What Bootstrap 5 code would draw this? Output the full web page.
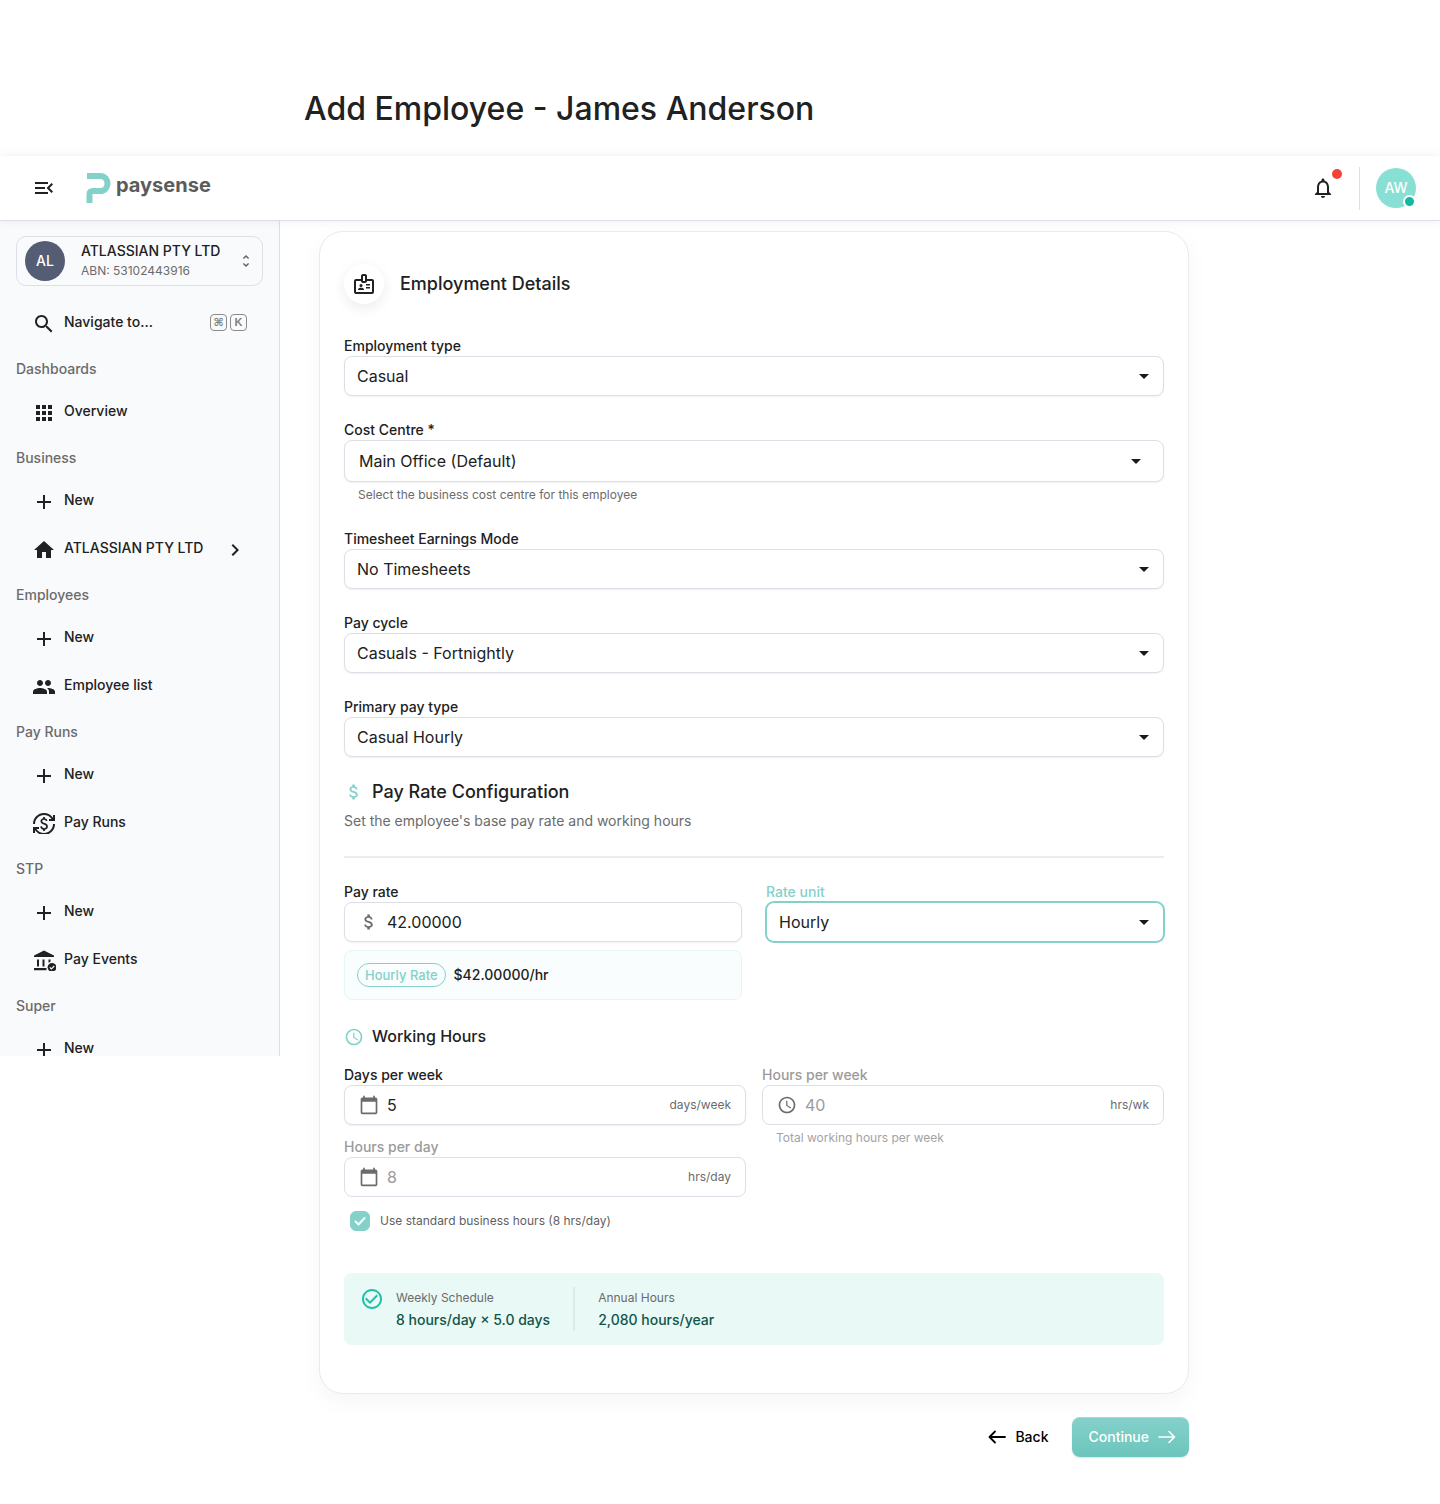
<!DOCTYPE html>
<html lang="en">
<head>
<meta charset="utf-8">
<meta name="viewport" content="width=device-width, initial-scale=1">
<title>Add Employee - Paysense</title>
<link href="https://cdn.jsdelivr.net/npm/bootstrap@5.3.0/dist/css/bootstrap.min.css" rel="stylesheet">
<style>
  :root { --teal: #84d1ca; --ink: #212121; --soft: #6b6b6b; --line: #dcdfe6; }
  body { font-family: Inter, "Liberation Sans", sans-serif; font-size: 14px; line-height: 20px; color: var(--ink); background: #fff; }
  svg { fill: currentColor; flex: none; display: block; }
  .i24 { width: 24px; height: 24px; }
  .i20 { width: 20px; height: 20px; }
  .i16 { width: 16px; height: 16px; }
  .page-title { font-size: 32px; line-height: 40px; font-weight: 500; padding: 89px 24px 27px 304px; margin: 0; }
  .topbar { height: 65px; padding: 0 24px 0 32px; background: #fff; border-bottom: 1px solid var(--line); box-shadow: 0 0 10px rgba(0,0,0,.07); position: relative; z-index: 2; }
  .icon-btn { border: 0; background: none; padding: 0; color: var(--ink); }
  .brand { gap: 5px; margin-left: 30px; color: #5b5b5b; font-weight: 700; font-size: 20px; line-height: 24px; text-decoration: none; }
  .brand span { padding-bottom: 6px; }
  .bell-dot { position: absolute; top: -7px; right: -7px; width: 10px; height: 10px; border-radius: 50%; background: #f44336; }
  .rule-v { width: 1px; height: 43px; background: var(--line); margin: 0 16px 0 24px; }
  .face { width: 40px; height: 40px; border-radius: 50%; color: #fff; font-size: 14px; font-weight: 500; position: relative; flex: none; }
  .face-me { background: #88dfd3; }
  .face-co { background: #555d74; }
  .online { position: absolute; right: 0; bottom: 0; width: 13px; height: 13px; border-radius: 50%; background: #12b8a0; border: 2px solid #fff; }
  .side { width: 280px; flex: none; max-height: 835px; overflow: hidden; padding: 15px 16px 0; background: #f9fafc; border-right: 1px solid var(--line); }
  .company { width: 100%; height: 50px; padding: 0 8px; gap: 16px; border: 1px solid var(--line); border-radius: 10px; background: none; color: var(--ink); margin-bottom: 14px; text-align: left; }
  .company > svg { fill: #606060; }
  .co-name { font-weight: 500; line-height: 20px; }
  .co-abn { font-size: 12px; line-height: 20px; color: var(--soft); }
  .side-head { font-size: 14px; line-height: 41px; font-weight: 500; color: var(--soft); margin: 0; }
  .side-link { height: 48px; padding: 0 16px; gap: 8px; color: var(--ink); font-weight: 500; text-decoration: none; }
  .side-link > span { padding-bottom: 4px; }
  .side-link > svg:first-child { clip-path: inset(0 0 2px 0); }
  .keys { gap: 3px; }
  .key { width: 17px; height: 17px; border: 1px solid #8a8a8a; border-radius: 4px; color: #808080; font: 700 11px/15px "Liberation Sans", "DejaVu Sans", sans-serif; text-align: center; }
  .content { padding: 10px 24px 47px 39px; }
  .wrap { max-width: 870px; }
  .panel { border: 1px solid #e9eaec; border-radius: 24px; background: #fff; padding: 32px 24px 48px; box-shadow: 0 8px 24px rgba(0,0,0,.04); }
  .round-ic { width: 40px; height: 40px; border-radius: 50%; background: #fff; box-shadow: 0 4px 14px rgba(0,0,0,.08); }
  .h-lg { font-size: 18px; line-height: 22px; font-weight: 500; margin: 0; }
  .h-md { font-size: 16px; line-height: 25px; font-weight: 500; margin: 0; }
  .lbl { display: block; font-size: 14px; line-height: 20px; font-weight: 500; }
  .lbl-off { color: #9b9b9b; }
  .field { margin-bottom: 24px; }
  .hint { font-size: 12px; line-height: 19px; color: var(--soft); padding: 3px 14px 1px; }
  .hint-off { color: #a3a3a3; }
  .sel, .box { height: 40px; border: 1px solid var(--line); border-radius: 8px; background-color: #fff; box-shadow: 0 1px 2px rgba(0,0,0,.06); color: var(--ink); font-size: 16px; }
  .sel { line-height: 24px; padding: 0 40px 0 12px; background-image: url("data:image/svg+xml,%3Csvg xmlns='http://www.w3.org/2000/svg' viewBox='0 0 24 24'%3E%3Cpath d='M7 10l5 5 5-5z' fill='%231a1a1a'/%3E%3C/svg%3E"); background-size: 24px 24px; background-position: right 7px center; }
  .sel-tall { height: 42px; padding-left: 14px; background-position: right 15px center; }
  .sel-on { border-color: var(--teal); box-shadow: 0 0 0 1px var(--teal); }
  .box { padding: 0 14px; gap: 8px; color: var(--soft); }
  .box-off { box-shadow: none; }
  .box input { border: 0; outline: 0; padding: 0; background: none; color: var(--ink); flex: 1 1 0; min-width: 0; height: 38px; }
  .box input:disabled { color: #9b9b9b; }
  .unit { font-size: 12px; }
  .sub-head { color: var(--soft); line-height: 21px; padding: 7px 0 25px; margin-bottom: 24px; border-bottom: 2px solid #ebecee; }
  .rate-note { height: 50px; margin-top: 8px; padding: 0 12px; gap: 8px; background: #f9fdfd; border: 1px solid #e6f6f4; border-radius: 8px; font-weight: 500; }
  .chip { border: 1px solid var(--teal); border-radius: 12px; color: var(--teal); font-size: 13px; line-height: 22px; padding: 0 7px; }
  .teal { color: var(--teal); }
  .hours-head { margin: 24px 0 16px; }
  .stack { gap: 12px; }
  .std { gap: 10px; margin: 14px 0 42px 6px; min-height: 20px; }
  .std input { width: 20px; height: 20px; margin: 0; border-radius: 6px; flex: none; }
  .std input[type=checkbox] { border-radius: 6px; }
  .std input:checked { background-color: var(--teal); border-color: var(--teal); background-size: 20px 20px; background-image: url("data:image/svg+xml,%3Csvg xmlns='http://www.w3.org/2000/svg' viewBox='0 0 20 20'%3E%3Cpath d='M5.500 10.500l3 3 6-6.500' fill='none' stroke='%23fff' stroke-width='2' stroke-linecap='round' stroke-linejoin='round'/%3E%3C/svg%3E"); }
  .std label { font-size: 12px; color: #5f5f5f; }
  .summary { background: #e9f9f6; border-radius: 8px; padding: 14px 16px; line-height: 22px; }
  .summary svg { fill: #22bfa7; }
  .summary small { display: block; font-size: 12px; color: var(--soft); }
  .summary strong { display: block; font-weight: 500; color: #0f5549; }
  .rule-s { width: 2px; background: #dfeae8; margin: 0 23px; }
  .foot { margin-top: 23px; gap: 16px; }
  .act { height: 40px; border-radius: 8px; font-size: 14px; line-height: 20px; font-weight: 500; gap: 8px; border: 0; }
  .act-back { padding: 0 8px; color: #000; }
  .act-next { padding: 0 12px 0 16px; color: #fff; background: linear-gradient(#84d1ca, #6cc5bc); box-shadow: 0 1px 2px rgba(0,0,0,.12), inset 0 1px 0 rgba(255,255,255,.25); }
  .act-next:hover { color: #fff; background: #6cc5bc; }
</style>
</head>
<body>
<svg class="d-none" aria-hidden="true">
  <symbol id="plus" viewBox="0 0 24 24"><path d="M19 13h-6v6h-2v-6H5v-2h6V5h2v6h6v2z"/></symbol>
  <symbol id="cal" viewBox="0 0 24 24"><path d="M20 3h-1V1h-2v2H7V1H5v2H4c-1.1 0-2 .9-2 2v16c0 1.1.9 2 2 2h16c1.1 0 2-.9 2-2V5c0-1.1-.9-2-2-2zm0 18H4V8h16v13z"/></symbol>
  <symbol id="clock" viewBox="0 0 24 24"><path d="M11.99 2C6.47 2 2 6.48 2 12s4.47 10 9.99 10C17.52 22 22 17.52 22 12S17.52 2 11.99 2zM12 20c-4.42 0-8-3.58-8-8s3.58-8 8-8 8 3.58 8 8-3.58 8-8 8zm.5-13H11v6l5.25 3.15.75-1.23-4.5-2.67z"/></symbol>
  <symbol id="money" viewBox="0 0 24 24"><path d="M11.8 10.9c-2.27-.59-3-1.2-3-2.15 0-1.09 1.01-1.85 2.7-1.85 1.78 0 2.44.85 2.5 2.1h2.21c-.07-1.72-1.12-3.3-3.21-3.81V3h-3v2.16c-1.94.42-3.5 1.68-3.5 3.61 0 2.31 1.91 3.46 4.7 4.13 2.5.6 3 1.48 3 2.41 0 .69-.49 1.79-2.7 1.79-2.06 0-2.87-.92-2.98-2.1h-2.2c.12 2.19 1.76 3.42 3.68 3.83V21h3v-2.15c1.95-.37 3.5-1.5 3.5-3.55 0-2.84-2.43-3.81-4.7-4.4z"/></symbol>
</svg>

<h1 class="page-title">Add Employee - James Anderson</h1>

<header class="topbar d-flex align-items-center">
  <button type="button" class="icon-btn" aria-label="Collapse menu"><svg class="i24" viewBox="0 0 24 24"><path d="M3 18h13v-2H3v2zm0-5h10v-2H3v2zm0-7v2h13V6H3zm18 9.59L17.42 12 21 8.41 19.59 7l-5 5 5 5L21 15.59z"/></svg></button>
  <a class="brand d-flex align-items-center" href="#">
    <svg width="25" height="30" viewBox="0 0 25 30"><path d="M1 3H14C24 3 24 18 14 18H7Q3.500 18 3.500 21V30" fill="none" stroke="#84d1ca" stroke-width="6"/></svg>
    <span>paysense</span>
  </a>
  <div class="d-flex align-items-center ms-auto">
    <button type="button" class="icon-btn position-relative" aria-label="Notifications"><svg class="i24" viewBox="0 0 24 24"><path d="M12 22c1.100 0 2-.9 2-2h-4c0 1.100.9 2 2 2zm6-6v-5c0-3.070-1.630-5.640-4.500-6.320V4c0-.83-.67-1.500-1.500-1.500s-1.500.67-1.500 1.500v.68C7.640 5.360 6 7.920 6 11v5l-2 2v1h16v-1l-2-2zm-2 1H8v-6c0-2.480 1.510-4.500 4-4.500s4 2.020 4 4.500v6z"/></svg><span class="bell-dot"></span></button>
    <div class="rule-v"></div>
    <div class="face face-me d-flex align-items-center justify-content-center">AW<span class="online"></span></div>
  </div>
</header>

<div class="d-flex align-items-start">
  <nav class="side" aria-label="Main">
    <button type="button" class="company d-flex align-items-center">
      <span class="face face-co d-flex align-items-center justify-content-center">AL</span>
      <span class="d-flex flex-column flex-grow-1"><span class="co-name">ATLASSIAN PTY LTD</span><span class="co-abn">ABN: 53102443916</span></span>
      <svg class="i16" viewBox="0 0 24 24"><path d="M12 5.830L15.170 9l1.410-1.410L12 3 7.410 7.590 8.830 9 12 5.830zm0 12.340L8.830 15l-1.410 1.410L12 21l4.590-4.590L15.170 15 12 18.170z"/></svg>
    </button>
    <a class="side-link d-flex align-items-center" href="#"><svg class="i24" viewBox="0 0 24 24"><path d="M15.500 14h-.79l-.28-.27C15.410 12.590 16 11.110 16 9.500 16 5.910 13.090 3 9.500 3S3 5.910 3 9.500 5.910 16 9.500 16c1.610 0 3.090-.59 4.230-1.570l.27.28v.79l5 4.990L20.490 19l-4.990-5zm-6 0C7.010 14 5 11.990 5 9.500S7.010 5 9.500 5 14 7.010 14 9.500 11.990 14 9.500 14z"/></svg><span>Navigate to...</span><span class="keys d-flex ms-auto"><kbd class="key bg-transparent p-0">⌘</kbd><kbd class="key bg-transparent p-0">K</kbd></span></a>
    <h2 class="side-head">Dashboards</h2>
    <a class="side-link d-flex align-items-center" href="#"><svg class="i24" viewBox="0 0 24 24"><path d="M4 8h4V4H4v4zm6 12h4v-4h-4v4zm-6 0h4v-4H4v4zm0-6h4v-4H4v4zm6 0h4v-4h-4v4zm6-10v4h4V4h-4zm-6 4h4V4h-4v4zm6 6h4v-4h-4v4zm0 6h4v-4h-4v4z"/></svg><span>Overview</span></a>
    <h2 class="side-head">Business</h2>
    <a class="side-link d-flex align-items-center" href="#"><svg class="i24"><use href="#plus"/></svg><span>New</span></a>
    <a class="side-link d-flex align-items-center" href="#"><svg class="i24" viewBox="0 0 24 24"><path d="M10 20v-6h4v6h5v-8h3L12 3 2 12h3v8z"/></svg><span>ATLASSIAN PTY LTD</span><svg class="i24 ms-auto" viewBox="0 0 24 24"><path d="M10 6 8.590 7.410 13.170 12l-4.580 4.590L10 18l6-6z"/></svg></a>
    <h2 class="side-head">Employees</h2>
    <a class="side-link d-flex align-items-center" href="#"><svg class="i24"><use href="#plus"/></svg><span>New</span></a>
    <a class="side-link d-flex align-items-center" href="#"><svg class="i24" viewBox="0 0 24 24"><path d="M16 11c1.660 0 2.990-1.340 2.990-3S17.660 5 16 5c-1.660 0-3 1.340-3 3s1.340 3 3 3zm-8 0c1.660 0 2.990-1.340 2.990-3S9.660 5 8 5C6.340 5 5 6.340 5 8s1.340 3 3 3zm0 2c-2.330 0-7 1.170-7 3.500V19h14v-2.500c0-2.330-4.670-3.500-7-3.500zm8 0c-.29 0-.62.020-.97.050 1.160.84 1.970 1.970 1.970 3.450V19h6v-2.500c0-2.330-4.670-3.500-7-3.500z"/></svg><span>Employee list</span></a>
    <h2 class="side-head">Pay Runs</h2>
    <a class="side-link d-flex align-items-center" href="#"><svg class="i24"><use href="#plus"/></svg><span>New</span></a>
    <a class="side-link d-flex align-items-center" href="#"><svg class="i24" viewBox="0 0 24 24"><path d="M12.890 11.100c-1.780-.59-2.640-.96-2.640-1.900 0-1.020 1.110-1.390 1.810-1.390 1.310 0 1.790.99 1.900 1.340l1.580-.67c-.15-.44-.82-1.910-2.660-2.230V5h-1.750v1.260c-2.600.56-2.620 2.850-2.620 2.960 0 2.270 2.250 2.910 3.350 3.310 1.580.56 2.280 1.070 2.280 2.030 0 1.130-1.050 1.610-1.980 1.610-1.820 0-2.340-1.870-2.400-2.090l-1.660.67c.63 2.190 2.280 2.780 3.020 2.960V19h1.750v-1.240c.52-.090 3.020-.59 3.020-3.220.010-1.390-.6-2.610-3-3.440zM3 21H1v-6h6v2H4.520c1.610 2.410 4.360 4 7.480 4 4.970 0 9-4.030 9-9h2c0 6.080-4.920 11-11 11-3.720 0-7.010-1.850-9-4.670V21zm-2-9C1 5.920 5.920 1 12 1c3.720 0 7.010 1.850 9 4.670V3h2v6h-6V7h2.480C17.870 4.590 15.120 3 12 3c-4.970 0-9 4.030-9 9H1z"/></svg><span>Pay Runs</span></a>
    <h2 class="side-head">STP</h2>
    <a class="side-link d-flex align-items-center" href="#"><svg class="i24"><use href="#plus"/></svg><span>New</span></a>
    <a class="side-link d-flex align-items-center" href="#"><svg class="i24" viewBox="0 0 24 24"><path d="M2 6.500 12 1.500l10 5V8H2zM5 10.500h2v7H5zM10.500 10.500h2v7h-2zM16.500 10.500h2v2.300l-2 1zM2 19h12.500v2.200H2z"/><circle cx="20" cy="18.300" r="4.400"/><path d="m17.800 18.300 1.600 1.600 2.900-2.900" fill="none" stroke="#f9fafc" stroke-width="1.200"/></svg><span>Pay Events</span></a>
    <h2 class="side-head">Super</h2>
    <a class="side-link d-flex align-items-center" href="#"><svg class="i24"><use href="#plus"/></svg><span>New</span></a>
  </nav>

  <main class="content flex-grow-1">
    <form class="wrap">
      <section class="panel">
        <div class="d-flex align-items-center gap-3 mb-4 pb-2">
          <div class="round-ic d-flex align-items-center justify-content-center"><svg class="i24" viewBox="0 0 24 24"><path fill-rule="evenodd" d="M20 7h-5V4c0-1.100-.9-2-2-2h-2c-1.100 0-2 .9-2 2v3H4c-1.100 0-2 .9-2 2v11c0 1.100.9 2 2 2h16c1.100 0 2-.9 2-2V9c0-1.100-.9-2-2-2zm-9-3h2v5h-2V4zm9 16H4V9h5c0 1.100.9 2 2 2h2c1.100 0 2-.9 2-2h5v11z"/><circle cx="9" cy="13.500" r="1.500"/><path d="M11.080 16.180C10.440 15.900 9.740 15.750 9 15.750s-1.440.15-2.080.43c-.56.24-.92.78-.92 1.390V18h6v-.43c0-.61-.36-1.150-.92-1.390zM14 12h4v1.500h-4zM14 15h4v1.500h-4z"/></svg></div>
          <h2 class="h-lg">Employment Details</h2>
        </div>
        <div class="field">
          <label class="lbl" for="etype">Employment type</label>
          <select id="etype" class="form-select sel"><option>Casual</option></select>
        </div>
        <div class="field">
          <label class="lbl" for="centre">Cost Centre *</label>
          <select id="centre" class="form-select sel sel-tall"><option>Main Office (Default)</option></select>
          <div class="hint">Select the business cost centre for this employee</div>
        </div>
        <div class="field">
          <label class="lbl" for="tmode">Timesheet Earnings Mode</label>
          <select id="tmode" class="form-select sel"><option>No Timesheets</option></select>
        </div>
        <div class="field">
          <label class="lbl" for="cycle">Pay cycle</label>
          <select id="cycle" class="form-select sel"><option>Casuals - Fortnightly</option></select>
        </div>
        <div class="field">
          <label class="lbl" for="ptype">Primary pay type</label>
          <select id="ptype" class="form-select sel"><option>Casual Hourly</option></select>
        </div>

        <div class="d-flex align-items-center gap-2">
          <svg class="i20 teal"><use href="#money"/></svg>
          <h3 class="h-lg">Pay Rate Configuration</h3>
        </div>
        <div class="sub-head">Set the employee's base pay rate and working hours</div>
        <div class="row">
          <div class="col-6">
            <label class="lbl" for="rate">Pay rate</label>
            <div class="box d-flex align-items-center"><svg class="i20"><use href="#money"/></svg><input id="rate" type="text" value="42.00000"></div>
            <div class="rate-note d-flex align-items-center"><span class="chip">Hourly Rate</span><span>$42.00000/hr</span></div>
          </div>
          <div class="col-6">
            <label class="lbl teal" for="unit">Rate unit</label>
            <select id="unit" class="form-select sel sel-on"><option>Hourly</option></select>
          </div>
        </div>

        <div class="hours-head d-flex align-items-center gap-2">
          <svg class="i20 teal"><use href="#clock"/></svg>
          <h3 class="h-md">Working Hours</h3>
        </div>
        <div class="row gx-3">
          <div class="col-6 d-flex flex-column stack">
            <div>
              <label class="lbl" for="days">Days per week</label>
              <div class="box d-flex align-items-center"><svg class="i20"><use href="#cal"/></svg><input id="days" type="text" value="5"><span class="unit">days/week</span></div>
            </div>
            <div>
              <label class="lbl lbl-off" for="hday">Hours per day</label>
              <div class="box box-off d-flex align-items-center"><svg class="i20"><use href="#cal"/></svg><input id="hday" type="text" value="8" disabled><span class="unit">hrs/day</span></div>
            </div>
          </div>
          <div class="col-6">
            <label class="lbl lbl-off" for="hweek">Hours per week</label>
            <div class="box box-off d-flex align-items-center"><svg class="i20"><use href="#clock"/></svg><input id="hweek" type="text" value="40" disabled><span class="unit">hrs/wk</span></div>
            <div class="hint hint-off">Total working hours per week</div>
          </div>
        </div>
        <div class="std d-flex align-items-center">
          <input class="form-check-input" type="checkbox" id="std" checked>
          <label for="std">Use standard business hours (8 hrs/day)</label>
        </div>

        <div class="summary d-flex">
          <svg class="i24" viewBox="0 0 24 24"><path d="M16.590 7.580 10 14.170l-3.590-3.580L5 12l5 5 8-8zM12 2C6.480 2 2 6.480 2 12s4.480 10 10 10 10-4.480 10-10S17.520 2 12 2zm0 18c-4.420 0-8-3.580-8-8s3.580-8 8-8 8 3.580 8 8-3.580 8-8 8z"/></svg>
          <div class="ms-2 ps-1"><small>Weekly Schedule</small><strong>8 hours/day × 5.0 days</strong></div>
          <div class="rule-s"></div>
          <div><small>Annual Hours</small><strong>2,080 hours/year</strong></div>
        </div>
      </section>

      <div class="foot d-flex justify-content-end">
        <button type="button" class="btn act act-back d-flex align-items-center"><svg class="i20" viewBox="0 0 20 20"><path d="M18 10H3M8 4.500 2.500 10 8 15.500" fill="none" stroke="currentColor" stroke-width="1.800" stroke-linecap="round" stroke-linejoin="round"/></svg>Back</button>
        <button type="button" class="btn act act-next d-flex align-items-center"><span>Continue</span><svg class="i20" viewBox="0 0 20 20"><path d="M2 10h15M12 4.500 17.500 10 12 15.500" fill="none" stroke="currentColor" stroke-width="1.600" stroke-linecap="round" stroke-linejoin="round"/></svg></button>
      </div>
    </form>
  </main>
</div>
<script src="https://cdn.jsdelivr.net/npm/bootstrap@5.3.0/dist/js/bootstrap.bundle.min.js"></script>
</body>
</html>
